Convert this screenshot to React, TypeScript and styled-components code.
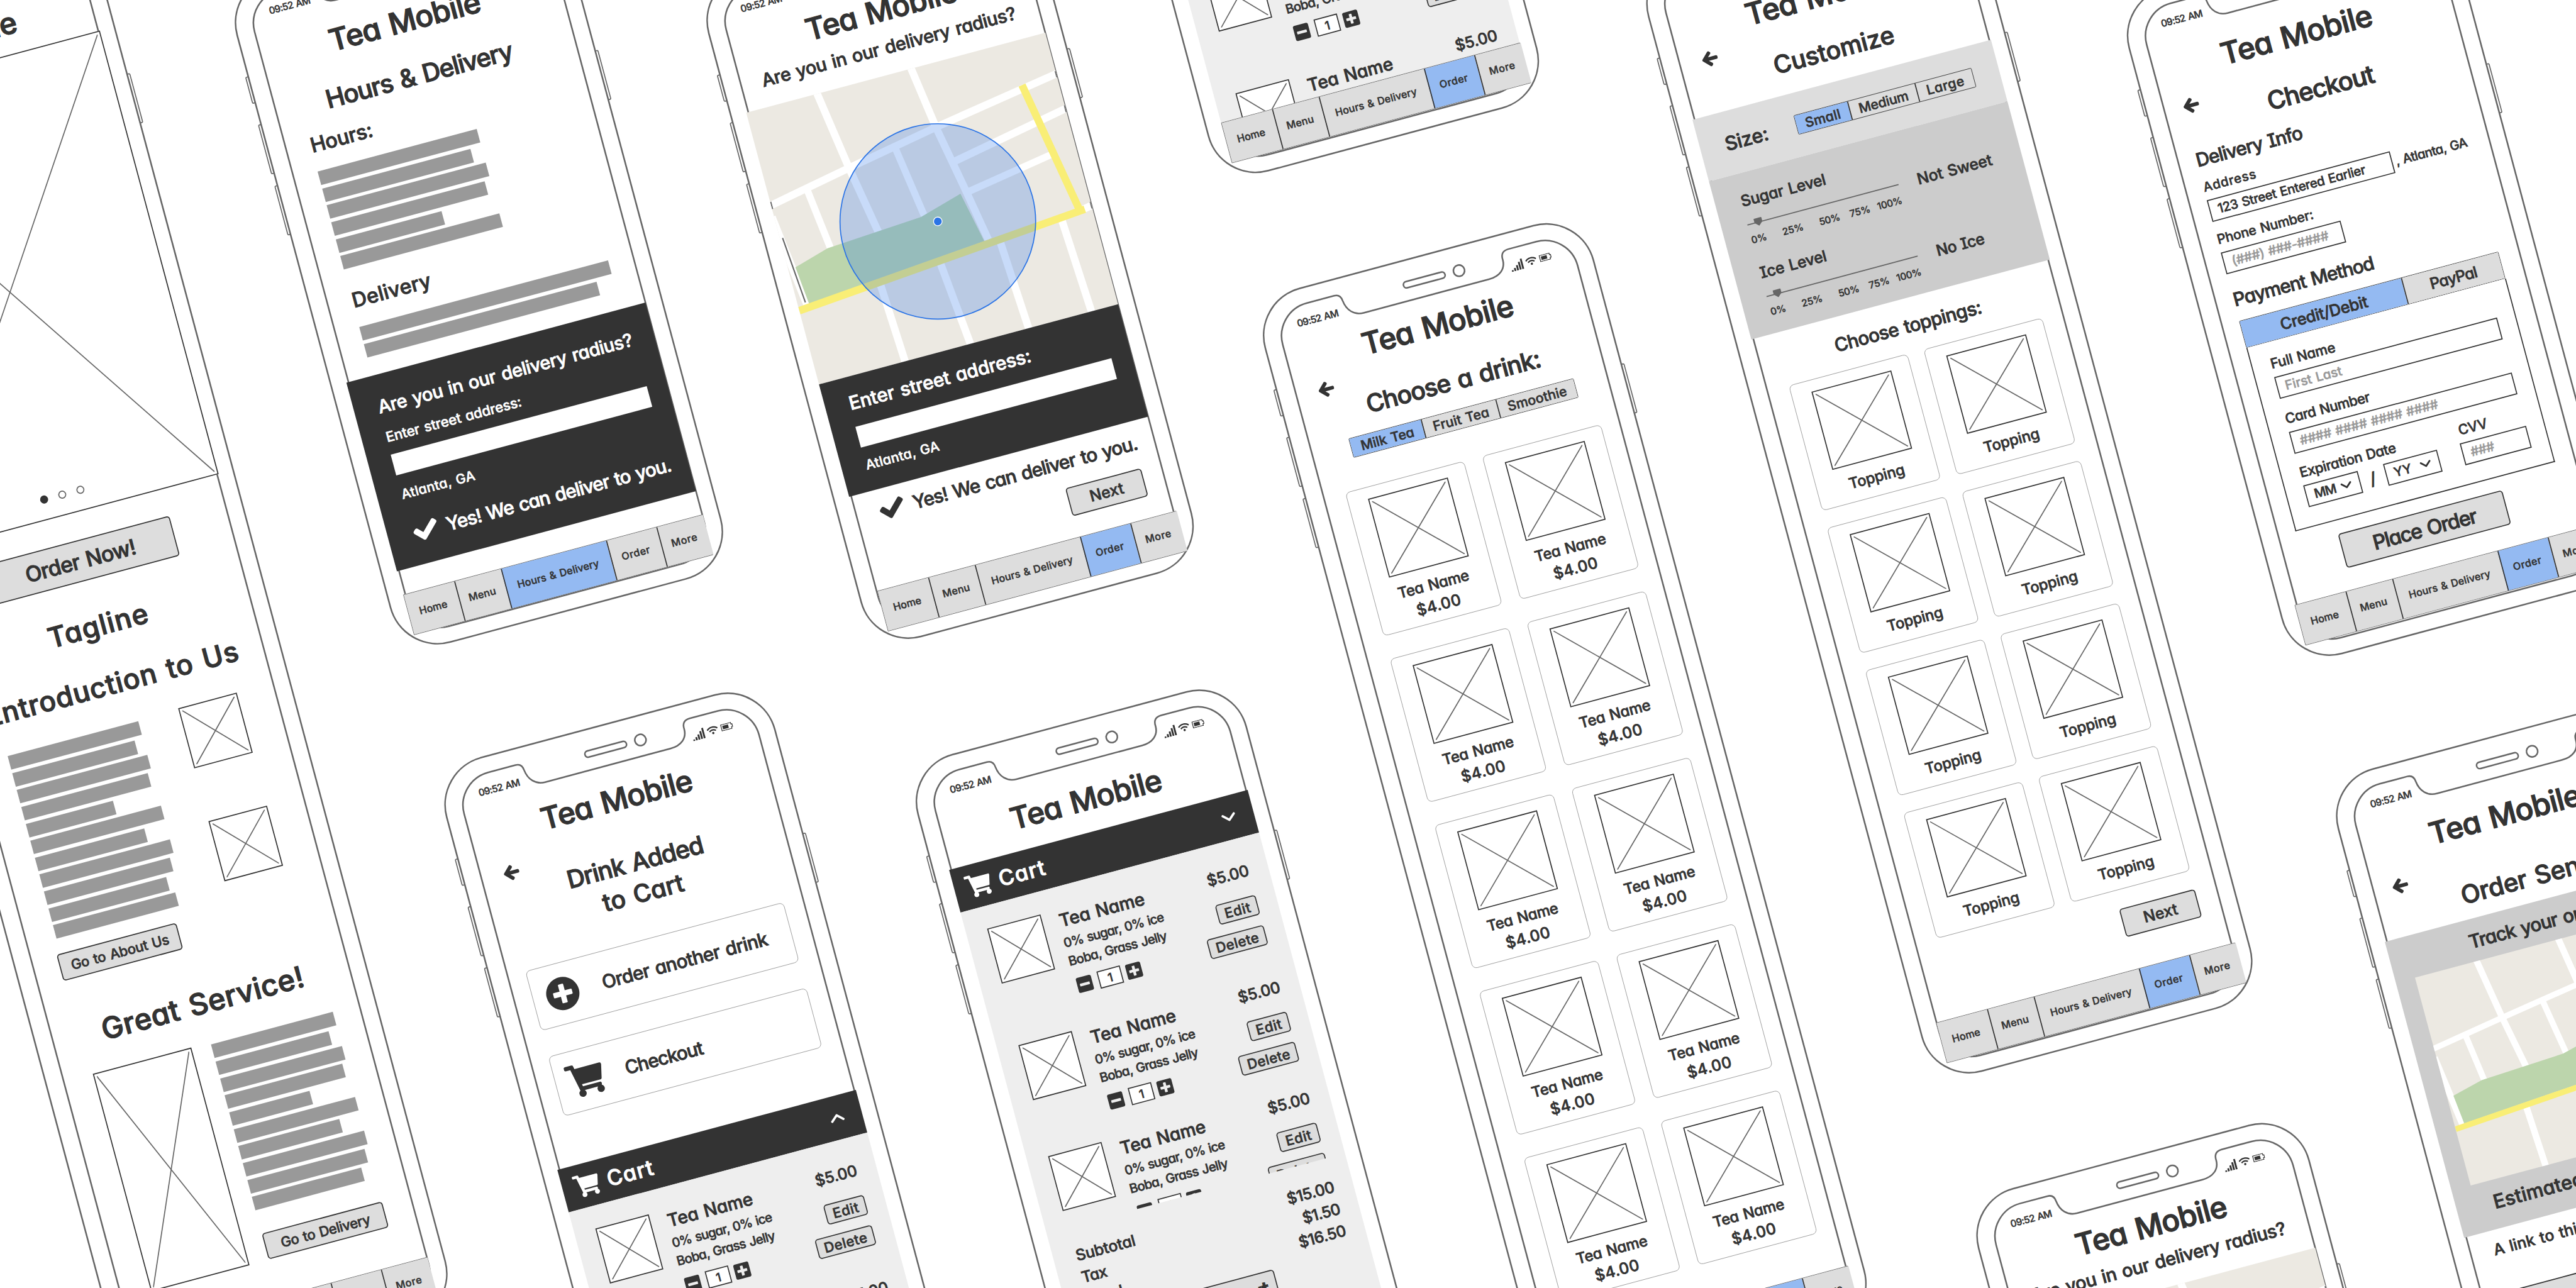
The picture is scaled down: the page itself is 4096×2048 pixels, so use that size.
import React, { useLayoutEffect, useRef } from "react";
import styled, { createGlobalStyle, css } from "styled-components";
import {
  FaArrowLeft,
  FaCheck,
  FaMinusSquare,
  FaPlusCircle,
  FaPlusSquare,
  FaShoppingCart,
  FaWifi,
} from "react-icons/fa";

const ink = "#333333";
const line = "#666666";
const soft = "#999999";
const button = "#dddddd";
const active = "#94baf2";

const Global = createGlobalStyle`
  html, body { margin: 0; padding: 0; background: #fff; }
  * { box-sizing: border-box; }
`;

/* ---------- board ---------- */

const Stage = styled.main`
  width: 4096px;
  height: 2048px;
  overflow: hidden;
  background: #fff;
  color: ${ink};
  font-family: Inter, "Open Sans", sans-serif;
  font-weight: 450;
  font-feature-settings: "cv11" 1, "cv08" 1;
`;

const Board = styled.div`
  width: 5200px;
  height: 4600px;
  transform-origin: 0 0;
  transform: scale(0.85315) rotate(-15deg);
`;

const Columns = styled.div`
  display: flex;
  align-items: flex-start;
  gap: 215px;
  margin-left: -441px;
`;

const Column = styled.div<{ $top: number; $gap?: number }>`
  flex: none;
  display: flex;
  flex-direction: column;
  gap: ${(p) => p.$gap ?? 225}px;
  margin-top: ${(p) => p.$top}px;
`;

/* ---------- text ---------- */

type TextProps = {
  $size: number;
  $h?: number;
  $mt?: number;
  $ml?: number;
  $align?: string;
  $color?: string;
};

const TextBox = styled.div<TextProps>`
  flex: none;
  font-size: ${(p) => p.$size}px;
  line-height: ${(p) => p.$h ?? Math.round(p.$size * 1.1)}px;
  margin-top: ${(p) => p.$mt ?? 0}px;
  margin-left: ${(p) => p.$ml ?? 0}px;
  text-align: ${(p) => p.$align ?? "left"};
  color: ${(p) => p.$color ?? "inherit"};
  word-spacing: 0.08em;
  -webkit-text-stroke: 0.028em currentColor;
  white-space: nowrap;
`;

const Run = styled.span`
  display: inline-block;
`;

/* Tracks a line of text out or in so that it takes the given width. */
function Text({ children, w, ...box }: TextProps & { children: string; w?: number }) {
  const ref = useRef<HTMLSpanElement>(null);
  useLayoutEffect(() => {
    const el = ref.current;
    if (!el || !w) return;
    el.style.letterSpacing = "0px";
    const target = w + box.$size * 0.1;
    el.style.letterSpacing = `${(target - el.offsetWidth) / children.length}px`;
  }, [children, w, box.$size]);
  return (
    <TextBox {...box}>
      <Run ref={ref}>{children}</Run>
    </TextBox>
  );
}

/* ---------- phone ---------- */

const PhoneBox = styled.section<{ $h: number }>`
  position: relative;
  flex: none;
  width: 635px;
  height: ${(p) => p.$h}px;
`;

const FrameArt = styled.svg`
  position: absolute;
  inset: 0;
  width: 100%;
  height: 100%;
  overflow: visible;
  fill: #fff;
  stroke: ${line};
  stroke-width: 3;
`;

const Screen = styled.div<{ $foot: number }>`
  position: relative;
  display: flex;
  flex-direction: column;
  height: 100%;
  margin: 0 29px 0 30px;
  padding-bottom: ${(p) => p.$foot}px;
`;

const StatusBar = styled.div`
  flex: none;
  display: flex;
  align-items: center;
  height: 76px;
  padding: 51px 44px 0 40px;
`;

const StatusIcons = styled.div`
  display: flex;
  align-items: center;
  gap: 5px;
  margin-left: auto;
`;

const Signal = () => (
  <svg width="24" height="20" viewBox="0 0 24 20" fill={ink}>
    <rect x="0" y="17" width="3.4" height="3" />
    <rect x="5" y="14" width="3.4" height="6" />
    <rect x="10" y="10" width="3.4" height="10" />
    <rect x="15" y="5" width="3.4" height="15" />
    <rect x="20" y="0" width="3.4" height="20" />
  </svg>
);

const Battery = () => (
  <svg width="25" height="13" viewBox="0 0 25 13" fill="none" stroke={ink} strokeWidth="1.4">
    <path d="M2 .8H20.500V4h2v5h-2v3.200H1.500V.8Z" />
    <rect x="4" y="3.200" width="11" height="6.600" fill={ink} stroke="none" />
  </svg>
);

function Frame({ h, w }: { h: number; w: number }) {
  const b = h - 30;
  const r = w - 32;
  return (
    <FrameArt>
      <rect x="-4" y="172" width="7" height="50" rx="2" strokeWidth="2" />
      <rect x="-4" y="264" width="7" height="94" rx="2" strokeWidth="2" />
      <rect x="-4" y="382" width="7" height="94" rx="2" strokeWidth="2" />
      <rect x={w - 3} y="293" width="7" height="94" rx="2" strokeWidth="2" />
      <rect x="1" y="1" width={w - 2} height={h - 2} rx="91" />
      <path
        d={`M97 31H150Q162 31 163 44C165 63 177 76 195 76H437C458 76 471 65 471 48Q470 31 486 31H${
          r - 63
        }A63 63 0 0 1 ${r} 94V${b - 63}A63 63 0 0 1 ${r - 63} ${b}H97A63 63 0 0 1 34 ${
          b - 63
        }V94A63 63 0 0 1 97 31Z`}
      />
      <rect x="280" y="40" width="80" height="12" rx="6" />
      <circle cx="387" cy="46" r="10.500" />
    </FrameArt>
  );
}

/* ---------- navigation ---------- */

const NavBar = styled.nav<{ $shift: number }>`
  flex: none;
  display: grid;
  grid-template-columns: 97px 90px 203px 97px 90px;
  height: 78px;
  width: 577px;
  margin-top: auto;
  transform: translateX(${(p) => p.$shift}px);
  background: ${button};
  border: 1.5px solid ${line};
`;

const NavTab = styled.a<{ $on: boolean }>`
  display: flex;
  align-items: center;
  justify-content: center;
  padding: 0 3px 3px 0;
  background: ${(p) => (p.$on ? active : button)};
  & + & {
    border-left: 2px solid ${ink};
  }
`;

const tabs: [string, number][] = [
  ["Home", 52],
  ["Menu", 50],
  ["Hours & Delivery", 155],
  ["Order", 53],
  ["More", 48],
];

const Nav = ({ on, shift = 0 }: { on: string; shift?: number }) => (
  <NavBar $shift={shift}>
    {tabs.map(([name, w]) => (
      <NavTab key={name} $on={name === on}>
        <Text $size={19} w={w}>
          {name}
        </Text>
      </NavTab>
    ))}
  </NavBar>
);

function Phone({
  h,
  w = 635,
  on,
  shift,
  foot = 31,
  title,
  titleShift,
  children,
}: {
  h: number;
  w?: number;
  on: string;
  shift?: number;
  foot?: number;
  title: number;
  titleShift: number;
  children: React.ReactNode;
}) {
  return (
    <PhoneBox $h={h}>
      <Frame h={h} w={w} />
      <Screen $foot={foot}>
        <StatusBar>
          <Text $size={18} w={77}>
            09:52 AM
          </Text>
          <StatusIcons>
            <Signal />
            <FaWifi size={21} />
            <Battery />
          </StatusIcons>
        </StatusBar>
        <Text $size={56} $h={60} $mt={title} $ml={titleShift * 2} $align="center" w={284}>
          Tea Mobile
        </Text>
        {children}
        <Nav on={on} shift={shift} />
      </Screen>
    </PhoneBox>
  );
}

/* ---------- shared parts ---------- */

const HeadRow = styled.header<{ $mt: number; $drop: number }>`
  flex: none;
  display: grid;
  grid-template-columns: 91px 1fr 91px;
  justify-items: center;
  align-items: start;
  margin-top: ${(p) => p.$mt}px;
  > div {
    margin-top: ${(p) => p.$drop}px;
  }
`;

const Back = styled(FaArrowLeft)<{ $mr?: number }>`
  width: 30px;
  height: 31px;
  justify-self: end;
  margin-right: ${(p) => p.$mr ?? 15}px;
  overflow: visible;
  stroke: currentColor;
  stroke-width: 34;
  stroke-linejoin: round;
`;

const Tick = styled(FaCheck)`
  width: 44px;
  height: 44px;
  overflow: visible;
  stroke: currentColor;
  stroke-width: 30;
  stroke-linejoin: round;
`;

const Stack = styled.div<{ $mt?: number; $ml?: number; $w?: number }>`
  flex: none;
  display: flex;
  flex-direction: column;
  margin-top: ${(p) => p.$mt ?? 0}px;
  margin-left: ${(p) => p.$ml ?? 0}px;
  width: ${(p) => (p.$w ? `${p.$w}px` : "auto")};
`;

const Row = styled.div<{ $mt?: number; $ml?: number; $gap?: number; $align?: string }>`
  flex: none;
  display: flex;
  align-items: ${(p) => p.$align ?? "center"};
  gap: ${(p) => p.$gap ?? 0}px;
  margin-top: ${(p) => p.$mt ?? 0}px;
  margin-left: ${(p) => p.$ml ?? 0}px;
`;

const BarList = styled.div<{ $mt: number; $ml?: number }>`
  flex: none;
  display: grid;
  gap: 6.65px;
  margin-top: ${(p) => p.$mt}px;
  margin-left: ${(p) => p.$ml ?? 0}px;
`;

const Bar = styled.div<{ $w: number }>`
  width: ${(p) => p.$w}px;
  height: 26px;
  background: ${soft};
`;

const Bars = ({ widths, mt, ml }: { widths: number[]; mt: number; ml?: number }) => (
  <BarList $mt={mt} $ml={ml}>
    {widths.map((w, i) => (
      <Bar key={i} $w={w} />
    ))}
  </BarList>
);

const Dark = styled.section<{ $mt: number; $h: number; $pad: number }>`
  flex: none;
  width: 577px;
  height: ${(p) => p.$h}px;
  margin-top: ${(p) => p.$mt}px;
  padding: ${(p) => p.$pad}px 0 0 45px;
  background: ${ink};
  color: #fff;
`;

const BlankInput = styled.div<{ $mt: number }>`
  width: 494px;
  height: 40px;
  margin-top: ${(p) => p.$mt}px;
  background: #fff;
`;

const Button = styled.button<{ $w: number; $h: number; $mt?: number; $ml?: number }>`
  flex: none;
  display: flex;
  align-items: center;
  justify-content: center;
  width: ${(p) => p.$w}px;
  height: ${(p) => p.$h}px;
  margin: ${(p) => p.$mt ?? 0}px 0 0 ${(p) => p.$ml ?? 0}px;
  padding: 0;
  font: inherit;
  font-feature-settings: inherit;
  color: inherit;
  background: ${button};
  border: 2px solid ${ink};
  border-radius: 6px;
`;

const PictureBox = styled.div<{ $w: number; $h: number; $mt?: number; $ml?: number }>`
  flex: none;
  display: grid;
  width: ${(p) => p.$w}px;
  height: ${(p) => p.$h}px;
  margin: ${(p) => p.$mt ?? 0}px 0 0 ${(p) => p.$ml ?? 0}px;
  background: #fff;
  border: 2px solid ${ink};
  > * {
    grid-area: 1 / 1;
  }
`;

const CrossArt = styled.svg`
  width: calc(100% - 8px);
  height: calc(100% - 8px);
  margin: 4px;
  stroke: ${line};
  stroke-width: 2;
`;

const Picture = ({
  w,
  h,
  mt,
  ml,
  children,
}: {
  w: number;
  h: number;
  mt?: number;
  ml?: number;
  children?: React.ReactNode;
}) => (
  <PictureBox $w={w} $h={h} $mt={mt} $ml={ml}>
    <CrossArt>
      <line x1="0" y1="0" x2="100%" y2="100%" />
      <line x1="100%" y1="0" x2="0" y2="100%" />
    </CrossArt>
    {children}
  </PictureBox>
);

const Segments = styled.div<{ $mt?: number; $ml?: number; $h: number }>`
  flex: none;
  display: flex;
  width: max-content;
  height: ${(p) => p.$h}px;
  margin-top: ${(p) => p.$mt ?? 0}px;
  margin-left: ${(p) => p.$ml ?? 0}px;
  border: 1.5px solid ${ink};
  border-radius: 2px;
`;

const Segment = styled.div<{ $w: number; $on?: boolean; $clear?: boolean }>`
  display: flex;
  align-items: center;
  justify-content: center;
  width: ${(p) => p.$w}px;
  background: ${(p) => (p.$on ? active : p.$clear ? "transparent" : button)};
  & + & {
    border-left: 2px solid ${ink};
  }
`;

const Chevron = ({ w, up, color }: { w: number; up?: boolean; color: string }) => (
  <svg width={w} height={w * 0.62} viewBox="0 0 26 16" fill="none">
    <path
      d={up ? "M3 13L13 4L23 13" : "M3 3L13 12L23 3"}
      stroke={color}
      strokeWidth="4"
      strokeLinecap="round"
      strokeLinejoin="round"
    />
  </svg>
);

/* ---------- map ---------- */

const MapArt = styled.svg<{ $mt: number; $ml?: number; $w: number; $h: number }>`
  flex: none;
  display: block;
  width: ${(p) => p.$w}px;
  height: ${(p) => p.$h}px;
  margin-top: ${(p) => p.$mt}px;
  margin-left: ${(p) => p.$ml ?? 0}px;
  background: #ece9e2;
`;

const CityMap = (p: { mt: number; ml?: number; w: number; h: number; radius?: boolean }) => (
  <MapArt $mt={p.mt} $ml={p.ml} $w={p.w} $h={p.h} viewBox="0 0 576 524" preserveAspectRatio="none">
    <g stroke="#fff" strokeWidth="14" fill="none">
      <path d="M-2 179L158 149L331 118L578 79" />
      <path d="M136 -4L158 148L182 290" />
      <path d="M317 -4L334 118L358 251L374 345" />
      <path d="M250 130L271 275" strokeWidth="13" />
      <path d="M72 165L87 290" strokeWidth="13" />
      <path d="M345 189L578 146" />
      <path d="M356 250L530 222" strokeWidth="13" />
      <path d="M-4 200L18 385" />
      <path d="M158 365L166 528" />
      <path d="M276 360L292 528" />
      <path d="M394 350L404 528" />
      <path d="M515 335L525 528" />
      <path d="M550 338L578 333" />
    </g>
    <path d="M14 302L81 283L264 272L346 249L366 346L21 374Z" fill="#bcd5ac" />
    <g stroke="#f9ee76" strokeWidth="14" fill="none">
      <path d="M0 382L562 337" />
      <path d="M509 83L553 340" />
    </g>
    {p.radius && (
      <>
        <path
          d="M1 172V186M575.500 74V86M575.500 140V153M575.500 326V339M5 243L15 370"
          stroke={line}
          strokeWidth="2.500"
        />
        <circle cx="292" cy="288" r="182" fill="#2b74e6" fillOpacity="0.26" stroke="#2b74e6" strokeWidth="2" />
        <circle cx="292" cy="288" r="8" fill="#2b74e6" stroke="#fff" strokeWidth="1.500" />
      </>
    )}
  </MapArt>
);

/* ---------- home ---------- */

const Dots = styled.div`
  display: flex;
  gap: 20px;
  place-self: end center;
  margin: 0 7px 29px 0;
`;

const Dot = styled.i<{ $on?: boolean }>`
  width: 15px;
  height: 15px;
  border-radius: 50%;
  border: 2px solid ${(p) => (p.$on ? ink : line)};
  background: ${(p) => (p.$on ? ink : "#fff")};
`;

const HomePhone = () => (
  <Phone h={2675} on="Home" shift={-4} foot={30} title={38} titleShift={-4}>
    <Picture w={576} h={856} mt={27}>
      <Dots>
        <Dot $on />
        <Dot />
        <Dot />
      </Dots>
    </Picture>
    <Button $w={364} $h={77} $mt={51} $ml={103}>
      <Text $size={40} w={207}>
        Order Now!
      </Text>
    </Button>
    <Text $size={52} $h={60} $mt={57} $ml={-4} $align="center" w={187}>
      Tagline
    </Text>
    <Text $size={52} $h={60} $mt={52} $ml={-4} $align="center" w={475}>
      Introduction to Us
    </Text>
    <Row $mt={45} $ml={60} $align="flex-start">
      <Stack $w={330}>
        <Bars mt={4} widths={[252, 236, 252, 244, 168, 252, 211, 252, 243, 227, 236]} />
        <Button $w={231} $h={51} $mt={29} $ml={-8}>
          <Text $size={26} w={185}>
            Go to About Us
          </Text>
        </Button>
      </Stack>
      <Stack>
        <Picture w={113} h={116} />
        <Picture w={113} h={116} mt={102} />
      </Stack>
    </Row>
    <Text $size={55} $h={60} $mt={76} $ml={8} $align="center" w={384}>
      Great Service!
    </Text>
    <Row $mt={45} $ml={60} $gap={37} $align="flex-start">
      <Picture w={190} h={420} />
      <Stack>
        <Bars mt={4} widths={[235, 218, 235, 227, 155, 234, 195, 234, 226, 211]} />
        <Button $w={232} $h={50} $mt={45}>
          <Text $size={26} w={169}>
            Go to Delivery
          </Text>
        </Button>
      </Stack>
    </Row>
  </Phone>
);

/* ---------- hours ---------- */

const Deliverable = ({ mt, ml }: { mt: number; ml: number }) => (
  <Row $mt={mt} $ml={ml} $gap={18}>
    <Tick />
    <Text $size={35} $h={40} w={428}>
      Yes! We can deliver to you.
    </Text>
  </Row>
);

const HoursPhone = () => (
  <Phone h={1288} w={639} on="Hours & Delivery" title={41} titleShift={-9}>
    <Text $size={47} $h={50} $mt={49} $ml={-18} $align="center" w={353}>
      Hours & Delivery
    </Text>
    <Text $size={38} $h={40} $mt={30} $ml={50} w={115}>
      Hours:
    </Text>
    <Bars mt={30} ml={50} widths={[307, 286, 307, 296, 204, 307]} />
    <Text $size={38} $h={40} $mt={40} $ml={50} w={147}>
      Delivery
    </Text>
    <Bars mt={31} ml={50} widths={[480, 449]} />
    <Dark $mt={35} $h={364} $pad={42}>
      <Text $size={34} $h={36} w={487}>
        Are you in our delivery radius?
      </Text>
      <Text $size={26} $h={28} $mt={26} w={258}>
        Enter street address:
      </Text>
      <BlankInput $mt={19} />
      <Text $size={25} $h={28} $mt={23} w={139}>
        Atlanta, GA
      </Text>
      <Deliverable mt={39} ml={5} />
    </Dark>
  </Phone>
);

/* ---------- delivery radius ---------- */

const PushRight = styled.div<{ $mt: number; $mr: number }>`
  flex: none;
  display: flex;
  justify-content: flex-end;
  margin: ${(p) => p.$mt}px ${(p) => p.$mr}px 0 0;
`;

const NextButton = ({ mt, mr }: { mt: number; mr: number }) => (
  <PushRight $mt={mt} $mr={mr}>
    <Button $w={146} $h={54}>
      <Text $size={29} w={62}>
        Next
      </Text>
    </Button>
  </PushRight>
);

const RadiusPhone = () => (
  <Phone h={1281} w={639} on="Order" shift={5} foot={26} title={28} titleShift={4}>
    <Text $size={34} $h={36} $mt={21} $align="center" w={486}>
      Are you in our delivery radius?
    </Text>
    <CityMap mt={32} w={577} h={524} radius />
    <Dark $mt={0} $h={217} $pad={30}>
      <Text $size={35} $h={38} w={346}>
        Enter street address:
      </Text>
      <BlankInput $mt={26} />
      <Text $size={25} $h={28} $mt={20} w={139}>
        Atlanta, GA
      </Text>
    </Dark>
    <Deliverable mt={19} ml={50} />
    <NextButton mt={26} mr={37} />
  </Phone>
);

/* ---------- cart ---------- */

const CartBar = styled.div<{ $mt: number }>`
  flex: none;
  display: flex;
  align-items: center;
  height: 82px;
  margin-top: ${(p) => p.$mt}px;
  padding: 0 33px 0 22px;
  background: ${ink};
  color: #fff;
  > :last-child {
    margin-left: auto;
  }
`;

const CartHeader = ({ mt, up }: { mt: number; up?: boolean }) => (
  <CartBar $mt={mt}>
    <FaShoppingCart size={48} />
    <Text $size={40} $h={48} $ml={15} w={86}>
      Cart
    </Text>
    <Chevron w={28} up={up} color="#fff" />
  </CartBar>
);

const CartBody = styled.div`
  flex: 1 1 0;
  min-height: 0;
  overflow: hidden;
  background: #eeeeee;
`;

const Item = styled.article<{ $h: number }>`
  display: flex;
  align-items: flex-start;
  height: ${(p) => p.$h}px;
  padding: 42px 37px 0 40px;
`;

const ItemInfo = styled.div`
  margin: 3px 0 0 28px;
`;

const ItemActions = styled.div`
  display: flex;
  flex-direction: column;
  align-items: flex-end;
  margin: 6px 0 0 auto;
`;

const Quantity = styled.div`
  display: flex;
  align-items: center;
  height: 33px;
  margin: 17px 0 0 2px;
`;

const QuantityValue = styled.div`
  display: grid;
  place-items: center;
  width: 45px;
  height: 33px;
  margin: 0 7px 0 10px;
  background: #fff;
  border: 2px solid ${ink};
`;

const CartItem = ({ h }: { h: number }) => (
  <Item $h={h}>
    <Picture w={103} h={106} />
    <ItemInfo>
      <Text $size={33} $h={36} $ml={3} w={160}>
        Tea Name
      </Text>
      <Text $size={24} $h={28} $mt={11} w={190}>
        0% sugar, 0% ice
      </Text>
      <Text $size={24} $h={28} $mt={7} w={186}>
        Boba, Grass Jelly
      </Text>
      <Quantity>
        <FaMinusSquare size={33} />
        <QuantityValue>
          <Text $size={22}>1</Text>
        </QuantityValue>
        <FaPlusSquare size={33} />
      </Quantity>
    </ItemInfo>
    <ItemActions>
      <Text $size={29} $h={30} w={77}>
        $5.00
      </Text>
      <Button $w={78} $h={38} $mt={32}>
        <Text $size={26} w={47}>
          Edit
        </Text>
      </Button>
      <Button $w={110} $h={38} $mt={20}>
        <Text $size={26} w={80}>
          Delete
        </Text>
      </Button>
    </ItemActions>
  </Item>
);

const CartList = styled.div`
  height: 619px;
  overflow: hidden;
`;

const TotalRow = styled.div`
  display: flex;
  justify-content: space-between;
  padding: 0 36px 0 42px;
`;

const Totals = styled.div`
  padding-top: 34px;
`;

const CartPhone = () => (
  <Phone h={1283} on="Order" title={40} titleShift={-8}>
    <CartHeader mt={31} />
    <CartBody>
      <CartList>
        <CartItem h={225} />
        <CartItem h={214} />
        <CartItem h={225} />
      </CartList>
      <Totals>
        {(
          [
            ["Subtotal", 111, "$15.00", 87],
            ["Tax", 45, "$1.50", 69],
            ["Total", 66, "$16.50", 87],
          ] as [string, number, string, number][]
        ).map(([name, nw, sum, sw]) => (
          <TotalRow key={name}>
            <Text $size={29} $h={42} w={nw}>
              {name}
            </Text>
            <Text $size={29} $h={42} w={sw}>
              {sum}
            </Text>
          </TotalRow>
        ))}
      </Totals>
      <Button $w={206} $h={66} $mt={14} $ml={185}>
        <Text $size={40} w={166}>
          Checkout
        </Text>
      </Button>
    </CartBody>
  </Phone>
);

/* ---------- drink added ---------- */

const Choice = styled.div<{ $mt: number }>`
  flex: none;
  display: grid;
  grid-template-columns: 72px auto;
  column-gap: 40px;
  align-items: center;
  justify-items: center;
  justify-content: start;
  width: 498px;
  height: 115px;
  margin: ${(p) => p.$mt}px 0 0 38px;
  padding-left: 20px;
  border: 1.5px solid ${soft};
  border-radius: 9px;
`;

const ChoiceText = styled.div`
  justify-self: start;
`;

const Heading = styled.div`
  text-align: center;
`;

const DrinkPhone = () => (
  <Phone h={1285} on="Order" foot={32} title={36} titleShift={-3}>
    <HeadRow $mt={35} $drop={27}>
      <Back />
      <Heading>
        <Text $size={46} $h={59} w={256} $align="center">
          Drink Added
        </Text>
        <Text $size={46} $h={59} w={150} $align="center">
          to Cart
        </Text>
      </Heading>
    </HeadRow>
    <Choice $mt={55}>
      <FaPlusCircle size={64} />
      <ChoiceText>
        <Text $size={35} w={315}>
          Order another drink
        </Text>
      </ChoiceText>
    </Choice>
    <Choice $mt={50}>
      <FaShoppingCart size={70} />
      <ChoiceText>
        <Text $size={35} w={145}>
          Checkout
        </Text>
      </ChoiceText>
    </Choice>
    <CartHeader mt={93} up />
    <CartBody>
      <CartItem h={225} />
      <CartItem h={225} />
    </CartBody>
  </Phone>
);

/* ---------- product cards ---------- */

const CardGrid = styled.div<{ $mt: number; $cols: number; $rows: number }>`
  flex: none;
  display: grid;
  grid-template-columns: 229px 229px;
  gap: ${(p) => p.$rows}px ${(p) => p.$cols}px;
  margin: ${(p) => p.$mt}px 0 0 45px;
`;

const Card = styled.article<{ $h: number }>`
  display: flex;
  flex-direction: column;
  align-items: center;
  height: ${(p) => p.$h}px;
  padding-top: 21px;
  border: 1.5px solid ${soft};
  border-radius: 9px;
`;

const DrinksPhone = () => (
  <Phone h={2134} on="Order" title={27} titleShift={4}>
    <HeadRow $mt={17} $drop={37}>
      <Back />
      <Text $size={46} $h={50} $ml={10} w={330}>
        Choose a drink:
      </Text>
    </HeadRow>
    <Segments $mt={28} $ml={77} $h={37}>
      <Segment $w={138} $on>
        <Text $size={25} w={100}>
          Milk Tea
        </Text>
      </Segment>
      <Segment $w={144}>
        <Text $size={25} w={105}>
          Fruit Tea
        </Text>
      </Segment>
      <Segment $w={150}>
        <Text $size={25} w={111}>
          Smoothie
        </Text>
      </Segment>
    </Segments>
    <CardGrid $mt={59} $cols={35} $rows={44}>
      {Array.from({ length: 10 }, (_, i) => (
        <Card key={i} $h={277}>
          <Picture w={154} h={152} />
          <Text $size={28} $h={39} $mt={14} w={133}>
            Tea Name
          </Text>
          <Text $size={29} $h={39} w={82}>
            $4.00
          </Text>
        </Card>
      ))}
    </CardGrid>
  </Phone>
);

/* ---------- customize ---------- */

const SizeBand = styled.section`
  flex: none;
  display: flex;
  align-items: center;
  height: 119px;
  margin-top: 33px;
  padding-left: 47px;
  background: #dddddd;
`;

const LevelBand = styled.section`
  flex: none;
  display: flex;
  flex-direction: column;
  gap: 46px;
  height: 305px;
  padding: 36px 0 0 48px;
  background: #cccccc;
`;

const Level = styled.div`
  display: grid;
  grid-template-columns: 291px auto;
  grid-template-rows: 32px 57px 3px;
  column-gap: 37px;
  align-items: center;
`;

const Track = styled.svg`
  display: block;
  grid-row: 2;
  width: 292px;
  height: 20px;
`;

const LevelValue = styled.div`
  grid-row: 2;
`;

const Ticks = styled.div`
  display: grid;
  grid-template-columns: 60px 71px 59px 53px 48px;
  grid-column: 1;
  grid-row: 3;
`;

const LevelSlider = (p: { name: string; w: number; value: string; vw: number }) => (
  <Level>
    <Text $size={29} $h={32} w={p.w}>
      {p.name}
    </Text>
    <Track viewBox="0 0 292 20">
      <path d="M0 10H292" stroke={line} strokeWidth="2" />
      <path d="M14 3Q14 2 15 2H28Q29 2 29 3V10L21.500 17L14 10Z" fill={line} />
    </Track>
    <LevelValue>
      <Text $size={29} $h={32} w={p.vw}>
        {p.value}
      </Text>
    </LevelValue>
    <Ticks>
      {(
        [
          ["0%", 28],
          ["25%", 38],
          ["50%", 38],
          ["75%", 37],
          ["100%", 46],
        ] as [string, number][]
      ).map(([t, w]) => (
        <Text key={t} $size={18} $h={20} w={w}>
          {t}
        </Text>
      ))}
    </Ticks>
  </Level>
);

const CustomizePhone = () => (
  <Phone h={2152} on="Order" shift={3} foot={32} title={31} titleShift={3}>
    <HeadRow $mt={15} $drop={34}>
      <Back />
      <Text $size={46} $h={50} w={227}>
        Customize
      </Text>
    </HeadRow>
    <SizeBand>
      <Text $size={36} w={79}>
        Size:
      </Text>
      <Segments $ml={54} $h={37}>
        <Segment $w={102} $on>
          <Text $size={25} w={65}>
            Small
          </Text>
        </Segment>
        <Segment $w={130} $clear>
          <Text $size={25} w={93}>
            Medium
          </Text>
        </Segment>
        <Segment $w={109} $clear>
          <Text $size={25} w={70}>
            Large
          </Text>
        </Segment>
      </Segments>
    </SizeBand>
    <LevelBand>
      <LevelSlider name="Sugar Level" w={160} value="Not Sweet" vw={141} />
      <LevelSlider name="Ice Level" w={124} value="No Ice" vw={88} />
    </LevelBand>
    <Text $size={35} $h={40} $mt={31} $align="center" w={279}>
      Choose toppings:
    </Text>
    <CardGrid $mt={30} $cols={31} $rows={33}>
      {Array.from({ length: 8 }, (_, i) => (
        <Card key={i} $h={242}>
          <Picture w={154} h={151} />
          <Text $size={28} $h={39} $mt={14} w={104}>
            Topping
          </Text>
        </Card>
      ))}
    </CardGrid>
    <NextButton mt={35} mr={43} />
  </Phone>
);

/* ---------- checkout ---------- */

const fieldLine = css`
  border: 2px solid ${ink};
  background: #fff;
`;

const Field = styled.div<{ $w: number; $mt?: number; $hint?: boolean }>`
  flex: none;
  display: flex;
  align-items: center;
  justify-content: space-between;
  width: ${(p) => p.$w}px;
  height: 42px;
  margin-top: ${(p) => p.$mt ?? 0}px;
  padding: 0 14px;
  color: ${(p) => (p.$hint ? soft : ink)};
  ${fieldLine}
`;

const Panel = styled.section`
  flex: none;
  display: flex;
  flex-direction: column;
  width: 501px;
  height: 354px;
  padding: 27px 0 0 34px;
  ${fieldLine}
  border-top: none;
`;

const CheckoutForm = styled.div`
  flex: none;
  display: flex;
  flex-direction: column;
  margin: 26px 0 0 37px;
`;

const CheckoutPhone = () => (
  <Phone h={1285} w={637} on="Order" foot={33} title={42} titleShift={-10}>
    <HeadRow $mt={31} $drop={21}>
      <Back $mr={21} />
      <Text $size={47} $h={50} $ml={16} w={199}>
        Checkout
      </Text>
    </HeadRow>
    <CheckoutForm>
      <Text $size={35} $h={40} w={200}>
        Delivery Info
      </Text>
      <Text $size={24} $h={28} $mt={19} w={99}>
        Address
      </Text>
      <Row $mt={10} $gap={6}>
        <Field $w={353}>
          <Text $size={24} w={282}>
            123 Street Entered Earlier
          </Text>
        </Field>
        <Text $size={24} w={135}>
          , Atlanta, GA
        </Text>
      </Row>
      <Text $size={25} $h={28} $mt={20} w={182}>
        Phone Number:
      </Text>
      <Field $w={231} $mt={11} $hint>
        <Text $size={24} w={183}>
          (###) ###-####
        </Text>
      </Field>
      <Text $size={35} $h={40} $mt={29} w={266}>
        Payment Method
      </Text>
      <Segments $mt={21} $h={52}>
        <Segment $w={311} $on>
          <Text $size={30} w={165}>
            Credit/Debit
          </Text>
        </Segment>
        <Segment $w={187}>
          <Text $size={29} w={87}>
            PayPal
          </Text>
        </Segment>
      </Segments>
      <Panel>
        <Text $size={26} $h={28} w={121}>
          Full Name
        </Text>
        <Field $w={430} $mt={11} $hint>
          <Text $size={24} w={106}>
            First Last
          </Text>
        </Field>
        <Text $size={26} $h={28} $mt={25} w={160}>
          Card Number
        </Text>
        <Field $w={430} $mt={11} $hint>
          <Text $size={24} w={263}>
            #### #### #### ####
          </Text>
        </Field>
        <Row $mt={23} $align="flex-start">
          <Stack $w={302}>
            <Text $size={26} $h={28} w={182}>
              Expiration Date
            </Text>
            <Row $mt={10}>
              <Field $w={105}>
                <Text $size={24} w={39}>
                  MM
                </Text>
                <Chevron w={22} color={ink} />
              </Field>
              <Text $size={32} $ml={18}>
                /
              </Text>
              <Row $ml={19}>
                <Field $w={104}>
                  <Text $size={24} w={31}>
                    YY
                  </Text>
                  <Chevron w={22} color={ink} />
                </Field>
              </Row>
            </Row>
          </Stack>
          <Stack>
            <Text $size={26} $h={28} $ml={4} w={52}>
              CVV
            </Text>
            <Field $w={128} $mt={10} $hint>
              <Text $size={24} w={42}>
                ###
              </Text>
            </Field>
          </Stack>
        </Row>
      </Panel>
      <Button $w={317} $h={66} $mt={25} $ml={75}>
        <Text $size={38} w={194}>
          Place Order
        </Text>
      </Button>
    </CheckoutForm>
  </Phone>
);

/* ---------- order sent ---------- */

const TrackBand = styled.section`
  flex: none;
  height: 571px;
  margin-top: 21px;
  padding-top: 21px;
  background: #cccccc;
`;

const SentPhone = () => (
  <Phone h={1285} on="Order" title={40} titleShift={-11}>
    <HeadRow $mt={33} $drop={38}>
      <Back $mr={21} />
      <Text $size={47} $h={50} w={252}>
        Order Sent!
      </Text>
    </HeadRow>
    <TrackBand>
      <Text $size={35} $h={40} $align="center" w={270}>
        Track your order:
      </Text>
      <CityMap mt={18} ml={37} w={502} h={401} />
      <Text $size={36} $h={40} $mt={21} $ml={70} w={435}>
        Estimated Time: 30 mins
      </Text>
    </TrackBand>
    <Text $size={29} $h={34} $mt={20} $ml={47}>
      A link to this page was sent to you.
    </Text>
    <Button $w={480} $h={66} $mt={63} $ml={48}>
      <Text $size={36}>Order Again</Text>
    </Button>
  </Phone>
);

export default function App() {
  return (
    <>
      <Global />
      <Stage>
        <Board>
          <Columns>
            <Column $top={-98}>
              <HomePhone />
            </Column>
            <Column $top={86} $gap={221}>
              <HoursPhone />
              <DrinkPhone />
            </Column>
            <Column $top={310} $gap={226}>
              <RadiusPhone />
              <CartPhone />
            </Column>
            <Column $top={-365}>
              <DrinkPhone />
              <DrinksPhone />
            </Column>
            <Column $top={733}>
              <CustomizePhone />
              <RadiusPhone />
            </Column>
            <Column $top={1022} $gap={221}>
              <CheckoutPhone />
              <SentPhone />
            </Column>
          </Columns>
        </Board>
      </Stage>
    </>
  );
}
